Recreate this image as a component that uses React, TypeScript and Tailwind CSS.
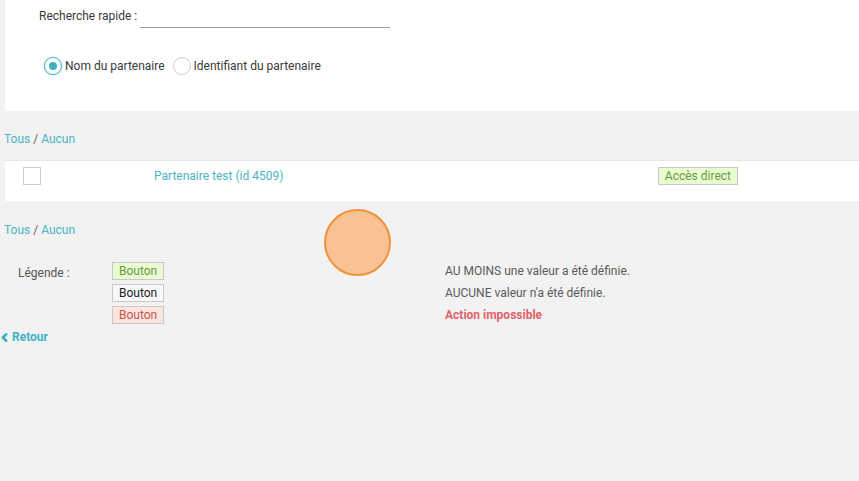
import { ChevronLeft } from "lucide-react";

function Badge({ tone, children }: { tone: "green" | "plain" | "red"; children: React.ReactNode }) {
  const tones = {
    green: "bg-[#e9fbd0] text-[#6a9a45]",
    plain: "bg-[#f8f8f8] text-[#222]",
    red: "bg-[#fde4de] text-[#c2584c]",
  };
  return (
    <span className={`inline-flex h-[18px] items-center border border-[#c8c8c8] px-[6px] text-[12px] leading-none ${tones[tone]}`}>
      {children}
    </span>
  );
}

function Radio({ checked, label }: { checked?: boolean; label: string }) {
  return (
    <label className="flex items-center gap-[3px]">
      <span
        className={`flex h-[18px] w-[18px] items-center justify-center rounded-full border bg-white ${
          checked ? "border-[#4fb6c4] shadow-[0_0_2px_#7fcad4]" : "border-[#cfcfcf]"
        }`}
      >
        {checked && <span className="h-[8px] w-[8px] rounded-full bg-[#3fb0c0]" />}
      </span>
      <span className="text-[12px] text-[#3a3a3a]">{label}</span>
    </label>
  );
}

function AllNone() {
  return (
    <div className="pl-[4px] text-[12px] text-[#4ab4c4]">
      Tous <span className="text-[#666]">/</span> Aucun
    </div>
  );
}

export default function App() {
  return (
    <div className="relative min-h-[481px] bg-[#f2f2f2] font-['Roboto',sans-serif]">
      {/* Recherche */}
      <div className="ml-[5px] h-[111px] bg-white pl-[34px] pt-[8px]">
        <div className="flex items-start">
          <span className="text-[12px] leading-[16px] text-[#3a3a3a]">Recherche rapide :</span>
          <div className="ml-[3px] h-[20px] w-[250px] border-b border-[#9a9a9a]" />
        </div>
        <div className="mt-[29px] flex items-center gap-[8px] pl-[5px]">
          <Radio checked label="Nom du partenaire" />
          <Radio label="Identifiant du partenaire" />
        </div>
      </div>

      <div className="mt-[19px]">
        <AllNone />
      </div>

      {/* Liste */}
      <div className="ml-[5px] mt-[12px] flex h-[41px] items-start border-t border-[#e6e6e6] bg-white pt-[6px]">
        <span className="ml-[18px] h-[18px] w-[18px] border border-[#cfcfcf] bg-white" />
        <span className="ml-[113px] text-[12px] leading-[18px] text-[#4ab4c4]">Partenaire test (id 4509)</span>
        <div className="ml-auto mr-[121px] flex">
          <Badge tone="green">Accès direct</Badge>
        </div>
      </div>

      <div className="mt-[20px]">
        <AllNone />
      </div>

      {/* Légende */}
      <div className="mt-[23px] flex">
        <div className="w-[112px] pl-[18px] pt-[2px] text-[12px] text-[#555]">Légende :</div>
        <div className="flex w-[333px] flex-col items-start gap-[4px]">
          <Badge tone="green">Bouton</Badge>
          <Badge tone="plain">Bouton</Badge>
          <Badge tone="red">Bouton</Badge>
        </div>
        <div className="flex flex-col gap-[4px] text-[12px]">
          <span className="flex h-[18px] items-center text-[#5a5a5a]">AU MOINS une valeur a été définie.</span>
          <span className="flex h-[18px] items-center text-[#5a5a5a]">AUCUNE valeur n'a été définie.</span>
          <span className="flex h-[18px] items-center font-bold text-[#e0636b]">Action impossible</span>
        </div>
      </div>

      <a className="mt-[4px] flex items-center gap-[1px] text-[12px] font-bold text-[#3fb4c4]">
        <ChevronLeft className="-ml-[2px] h-[13px] w-[13px]" strokeWidth={5} />
        Retour
      </a>

      {/* Curseur */}
      <div className="absolute left-[324px] top-[209px] h-[67px] w-[67px] rounded-full border-[2px] border-[#f19238] bg-[#f8c295]" />
    </div>
  );
}
